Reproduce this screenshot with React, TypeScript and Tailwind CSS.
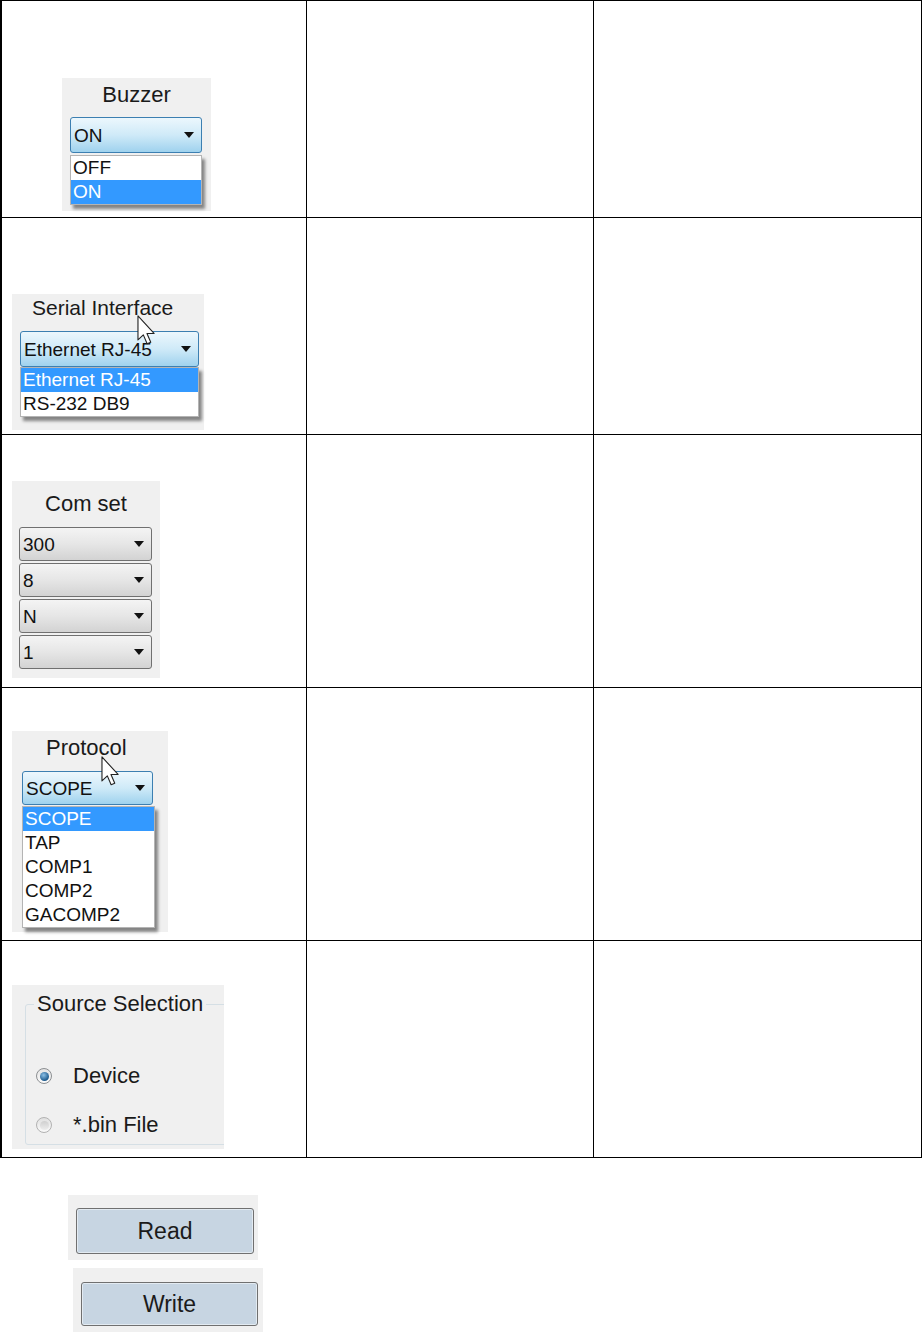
import clsx from 'clsx'

function Arrow() {
  return (
    <svg width="10" height="6" viewBox="0 0 10 6" className="shrink-0">
      <path d="M0 0 L10 0 L5 6 Z" fill="#111" />
    </svg>
  )
}

function Cursor({ className }: { className: string }) {
  return (
    <svg className={className} width="19" height="30" viewBox="0 0 12 19">
      <path
        d="M0.6 0.6 L0.6 15.8 L4 12.6 L6.4 18.2 L8.7 17.2 L6.3 11.7 L10.8 11.7 Z"
        fill="white"
        stroke="#222"
        strokeWidth="0.7"
        strokeLinejoin="round"
      />
    </svg>
  )
}

function Combo({
  value,
  focused,
  className,
}: {
  value: string
  focused?: boolean
  className: string
}) {
  return (
    <div
      className={clsx(
        'flex items-center justify-between rounded-[3px] border pl-[3px] pr-[7px] text-[19px] leading-none text-[#111]',
        focused
          ? 'border-[#3c7fb1] bg-linear-to-b from-[#ecf7fd] via-[#cfeaf8] to-[#9fd2ee]'
          : 'border-[#707070] bg-linear-to-b from-[#f4f4f4] via-[#e6e6e6] to-[#d3d3d3]',
        className
      )}
    >
      <span>{value}</span>
      <Arrow />
    </div>
  )
}

function DropList({
  items,
  selected,
  className,
}: {
  items: string[]
  selected: string
  className: string
}) {
  return (
    <div
      className={clsx(
        'border border-[#b4b4b4] bg-white text-[19px] shadow-[3px_4px_3px_rgba(0,0,0,0.45)]',
        className
      )}
    >
      {items.map((item) => (
        <div
          key={item}
          className={clsx(
            'h-[24px] pl-[2px] leading-[24px]',
            item === selected ? 'bg-[#3399ff] text-white' : 'text-[#111]'
          )}
        >
          {item}
        </div>
      ))}
    </div>
  )
}

function Radio({ checked, label }: { checked?: boolean; label: string }) {
  return (
    <div className="flex h-[26px] items-center gap-[21px]">
      <span
        className={clsx(
          'flex h-[16px] w-[16px] items-center justify-center rounded-full border',
          checked
            ? 'border-[#8c8f92] bg-linear-to-b from-[#e4e4e4] to-[#fbfbfb]'
            : 'border-[#b2b2b2] bg-linear-to-b from-[#e0e0e0] to-[#fafafa]'
        )}
      >
        {checked ? (
          <span className="h-[9px] w-[9px] rounded-full bg-[radial-gradient(circle_at_40%_35%,#8cc0e6,#1d5a8c_70%)]" />
        ) : (
          <span className="h-[9px] w-[9px] rounded-full bg-linear-to-b from-[#cfcfcf] to-[#ededed]" />
        )}
      </span>
      <span className="text-[22px] leading-[26px] text-[#1a1a1a]">{label}</span>
    </div>
  )
}

function Buzzer() {
  return (
    <div className="flex h-[133px] w-[149px] flex-col bg-[#f0f0f0] pl-[8px] pt-[4px]">
      <div className="pr-[8px] text-center text-[22px] leading-[26px] text-[#1a1a1a]">Buzzer</div>
      <Combo value="ON" focused className="mt-[9px] h-[36px] w-[132px]" />
      <DropList items={['OFF', 'ON']} selected="ON" className="mt-[2px] w-[132px]" />
    </div>
  )
}

function SerialInterface() {
  return (
    <div className="relative flex h-[136px] w-[192px] flex-col bg-[#f0f0f0] pl-[8px] pt-[1px]">
      <div className="pl-[12px] text-[21px] leading-[26px] text-[#1a1a1a]">Serial Interface</div>
      <Combo value="Ethernet RJ-45" focused className="mt-[10px] h-[36px] w-[179px]" />
      <DropList
        items={['Ethernet RJ-45', 'RS-232 DB9']}
        selected="Ethernet RJ-45"
        className="w-[179px]"
      />
      <Cursor className="absolute left-[125px] top-[21px]" />
    </div>
  )
}

function ComSet() {
  return (
    <div className="flex h-[197px] w-[148px] flex-col gap-[2px] bg-[#f0f0f0] pl-[7px] pt-[10px]">
      <div className="mb-[8px] pr-[7px] text-center text-[22px] leading-[26px] text-[#1a1a1a]">Com set</div>
      <Combo value="300" className="h-[34px] w-[133px]" />
      <Combo value="8" className="h-[34px] w-[133px]" />
      <Combo value="N" className="h-[34px] w-[133px]" />
      <Combo value="1" className="h-[34px] w-[133px]" />
    </div>
  )
}

function Protocol() {
  return (
    <div className="relative flex h-[201px] w-[156px] flex-col bg-[#f0f0f0] pl-[10px] pt-[4px]">
      <div className="pl-[24px] text-[22px] leading-[26px] text-[#1a1a1a]">Protocol</div>
      <Combo value="SCOPE" focused className="mt-[10px] h-[34px] w-[131px]" />
      <DropList
        items={['SCOPE', 'TAP', 'COMP1', 'COMP2', 'GACOMP2']}
        selected="SCOPE"
        className="mt-[1px] w-[133px]"
      />
      <Cursor className="absolute left-[89px] top-[25px]" />
    </div>
  )
}

function SourceSelection() {
  return (
    <div className="h-[164px] w-[212px] overflow-hidden bg-[#f0f0f0] pt-[6px]">
      <fieldset className="ml-[13px] h-[154px] w-[230px] rounded-[3px] border border-[#d5dfe5]">
        <legend className="ml-[8px] px-[3px] text-[22px] leading-[26px] text-[#1a1a1a]">
          Source Selection
        </legend>
        <div className="flex flex-col gap-[23px] pl-[10px] pt-[46px]">
          <Radio checked label="Device" />
          <Radio label="*.bin File" />
        </div>
      </fieldset>
    </div>
  )
}

function WinButton({ label, className }: { label: string; className: string }) {
  return (
    <div
      className={clsx(
        'flex items-center justify-center rounded-[3px] border border-[#707070] bg-[#c7d5e2] text-[23px] text-[#1b1b1b] shadow-[inset_0_0_0_1px_#e3ebf2]',
        className
      )}
    >
      {label}
    </div>
  )
}

const rows = [
  { h: 'h-[217px]', pad: 'pl-[60px] pt-[77px]', widget: <Buzzer /> },
  { h: 'h-[217px]', pad: 'pl-[10px] pt-[76px]', widget: <SerialInterface /> },
  { h: 'h-[253px]', pad: 'pl-[10px] pt-[46px]', widget: <ComSet /> },
  { h: 'h-[253px]', pad: 'pl-[10px] pt-[43px]', widget: <Protocol /> },
  { h: 'h-[217px]', pad: 'pl-[10px] pt-[44px]', widget: <SourceSelection /> },
]

export default function App() {
  return (
    <div className="min-h-[1332px] w-[922px] overflow-hidden bg-white [font-family:'Liberation_Sans',Arial,sans-serif]">
      <div className="grid w-[922px] grid-cols-[305px_287px_328px] border-l-2 border-t border-black">
        {rows.map((row, i) => (
          <div key={i} className="contents">
            <div className={clsx('border-b border-r border-black', row.h, row.pad)}>{row.widget}</div>
            <div className={clsx('border-b border-r border-black', row.h)} />
            <div className={clsx('border-b border-r border-black', row.h)} />
          </div>
        ))}
      </div>

      <div className="ml-[68px] mt-[37px] h-[65px] w-[190px] bg-[#f0f0f0] pl-[8px] pt-[13px]">
        <WinButton label="Read" className="h-[46px] w-[178px]" />
      </div>
      <div className="ml-[73px] mt-[8px] h-[64px] w-[190px] bg-[#f0f0f0] pl-[8px] pt-[14px]">
        <WinButton label="Write" className="h-[44px] w-[177px]" />
      </div>
    </div>
  )
}
